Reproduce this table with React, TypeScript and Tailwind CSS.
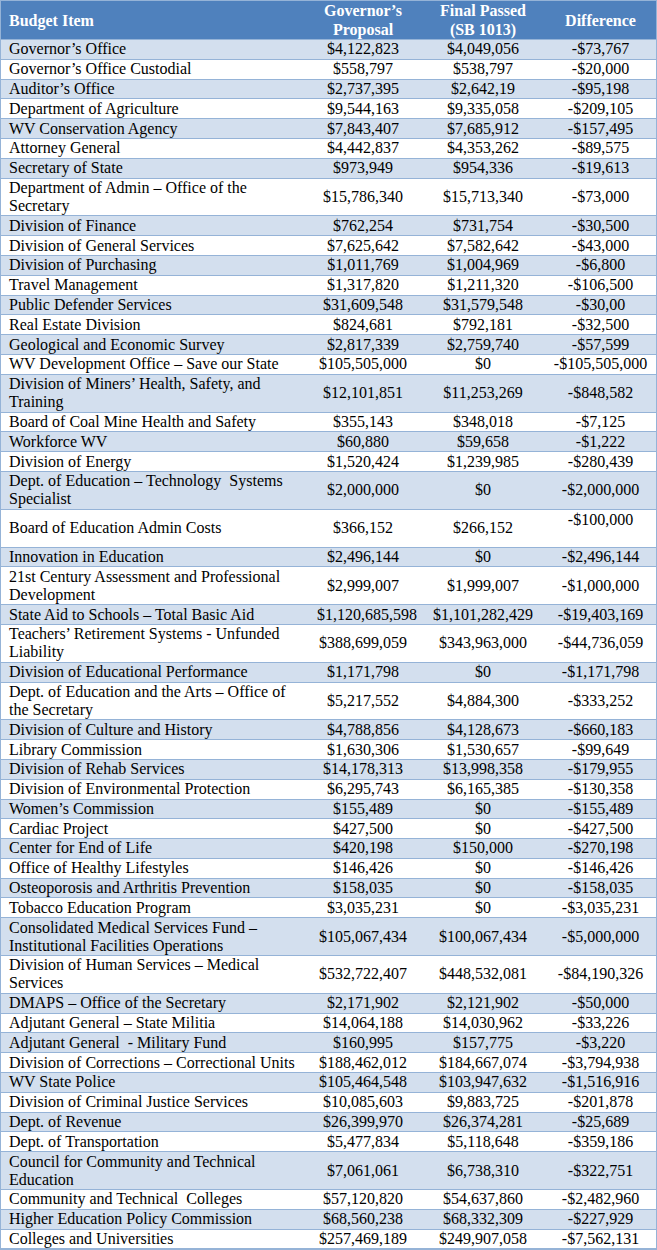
import React from 'react'

type Row = { name: string; gov: string; fin: string; diff: string; tall?: boolean }

const r = (name: string, gov: string, fin: string, diff: string, tall = false): Row => ({ name, gov, fin, diff, tall })

const rows: Row[] = [
    r('Governor’s Office', '$4,122,823', '$4,049,056', '-$73,767'),
    r('Governor’s Office Custodial', '$558,797', '$538,797', '-$20,000'),
    r('Auditor’s Office', '$2,737,395', '$2,642,19', '-$95,198'),
    r('Department of Agriculture', '$9,544,163', '$9,335,058', '-$209,105'),
    r('WV Conservation Agency', '$7,843,407', '$7,685,912', '-$157,495'),
    r('Attorney General', '$4,442,837', '$4,353,262', '-$89,575'),
    r('Secretary of State', '$973,949', '$954,336', '-$19,613'),
    r('Department of Admin – Office of the\nSecretary', '$15,786,340', '$15,713,340', '-$73,000'),
    r('Division of Finance', '$762,254', '$731,754', '-$30,500'),
    r('Division of General Services', '$7,625,642', '$7,582,642', '-$43,000'),
    r('Division of Purchasing', '$1,011,769', '$1,004,969', '-$6,800'),
    r('Travel Management', '$1,317,820', '$1,211,320', '-$106,500'),
    r('Public Defender Services', '$31,609,548', '$31,579,548', '-$30,00'),
    r('Real Estate Division', '$824,681', '$792,181', '-$32,500'),
    r('Geological and Economic Survey', '$2,817,339', '$2,759,740', '-$57,599'),
    r('WV Development Office – Save our State', '$105,505,000', '$0', '-$105,505,000'),
    r('Division of Miners’ Health, Safety, and\nTraining', '$12,101,851', '$11,253,269', '-$848,582'),
    r('Board of Coal Mine Health and Safety', '$355,143', '$348,018', '-$7,125'),
    r('Workforce WV', '$60,880', '$59,658', '-$1,222'),
    r('Division of Energy', '$1,520,424', '$1,239,985', '-$280,439'),
    r('Dept. of Education – Technology  Systems\nSpecialist', '$2,000,000', '$0', '-$2,000,000'),
    r('Board of Education Admin Costs', '$366,152', '$266,152', '-$100,000', true),
    r('Innovation in Education', '$2,496,144', '$0', '-$2,496,144'),
    r('21st Century Assessment and Professional\nDevelopment', '$2,999,007', '$1,999,007', '-$1,000,000'),
    r('State Aid to Schools – Total Basic Aid', '$1,120,685,598', '$1,101,282,429', '-$19,403,169'),
    r('Teachers’ Retirement Systems - Unfunded\nLiability', '$388,699,059', '$343,963,000', '-$44,736,059'),
    r('Division of Educational Performance', '$1,171,798', '$0', '-$1,171,798'),
    r('Dept. of Education and the Arts – Office of\nthe Secretary', '$5,217,552', '$4,884,300', '-$333,252'),
    r('Division of Culture and History', '$4,788,856', '$4,128,673', '-$660,183'),
    r('Library Commission', '$1,630,306', '$1,530,657', '-$99,649'),
    r('Division of Rehab Services', '$14,178,313', '$13,998,358', '-$179,955'),
    r('Division of Environmental Protection', '$6,295,743', '$6,165,385', '-$130,358'),
    r('Women’s Commission', '$155,489', '$0', '-$155,489'),
    r('Cardiac Project', '$427,500', '$0', '-$427,500'),
    r('Center for End of Life', '$420,198', '$150,000', '-$270,198'),
    r('Office of Healthy Lifestyles', '$146,426', '$0', '-$146,426'),
    r('Osteoporosis and Arthritis Prevention', '$158,035', '$0', '-$158,035'),
    r('Tobacco Education Program', '$3,035,231', '$0', '-$3,035,231'),
    r('Consolidated Medical Services Fund –\nInstitutional Facilities Operations', '$105,067,434', '$100,067,434', '-$5,000,000'),
    r('Division of Human Services – Medical\nServices', '$532,722,407', '$448,532,081', '-$84,190,326'),
    r('DMAPS – Office of the Secretary', '$2,171,902', '$2,121,902', '-$50,000'),
    r('Adjutant General – State Militia', '$14,064,188', '$14,030,962', '-$33,226'),
    r('Adjutant General  - Military Fund', '$160,995', '$157,775', '-$3,220'),
    r('Division of Corrections – Correctional Units', '$188,462,012', '$184,667,074', '-$3,794,938'),
    r('WV State Police', '$105,464,548', '$103,947,632', '-$1,516,916'),
    r('Division of Criminal Justice Services', '$10,085,603', '$9,883,725', '-$201,878'),
    r('Dept. of Revenue', '$26,399,970', '$26,374,281', '-$25,689'),
    r('Dept. of Transportation', '$5,477,834', '$5,118,648', '-$359,186'),
    r('Council for Community and Technical\nEducation', '$7,061,061', '$6,738,310', '-$322,751'),
    r('Community and Technical  Colleges', '$57,120,820', '$54,637,860', '-$2,482,960'),
    r('Higher Education Policy Commission', '$68,560,238', '$68,332,309', '-$227,929'),
    r('Colleges and Universities', '$257,469,189', '$249,907,058', '-$7,562,131'),
]

const grid = 'grid grid-cols-[312px_100px_140px_1fr]'
const numCell = 'flex items-center [justify-content:safe_center] px-1 whitespace-nowrap'

function BudgetRow({ row, idx }: { row: Row; idx: number }) {
    const double = row.tall || row.name.includes('\n')
    return (
        <div className={`${grid} border-b border-[#95b3d7] ${double ? 'h-[37.8px]' : 'h-[19.8px]'} ${idx % 2 === 0 ? 'bg-[#d3dfee]' : 'bg-white'}`}>
            <div className="flex items-center pl-2 whitespace-pre">{row.name}</div>
            <div className={numCell}>{row.gov}</div>
            <div className={numCell}>{row.fin}</div>
            <div className={`flex ${row.tall ? 'items-start pt-[1px]' : 'items-center'} justify-center pr-2 whitespace-nowrap`}>{row.diff}</div>
        </div>
    )
}

export default function App() {
    return (
        <div className="w-[657px] bg-white font-['Liberation_Serif',serif] text-[16px] leading-[18px] text-black">
            <div className="border border-[#95b3d7]">
                <div className={`${grid} h-[39px] bg-[#4f81bd] text-white font-bold border-b border-[#95b3d7] leading-[19px]`}>
                    <div className="flex items-center pl-2">Budget Item</div>
                    <div className="flex items-center justify-center text-center">Governor’s<br />Proposal</div>
                    <div className="flex items-center justify-center text-center">Final Passed<br />(SB 1013)</div>
                    <div className="flex items-center justify-center pr-2">Difference</div>
                </div>
                {rows.map((row, i) => <BudgetRow key={i} row={row} idx={i} />)}
            </div>
        </div>
    )
}
